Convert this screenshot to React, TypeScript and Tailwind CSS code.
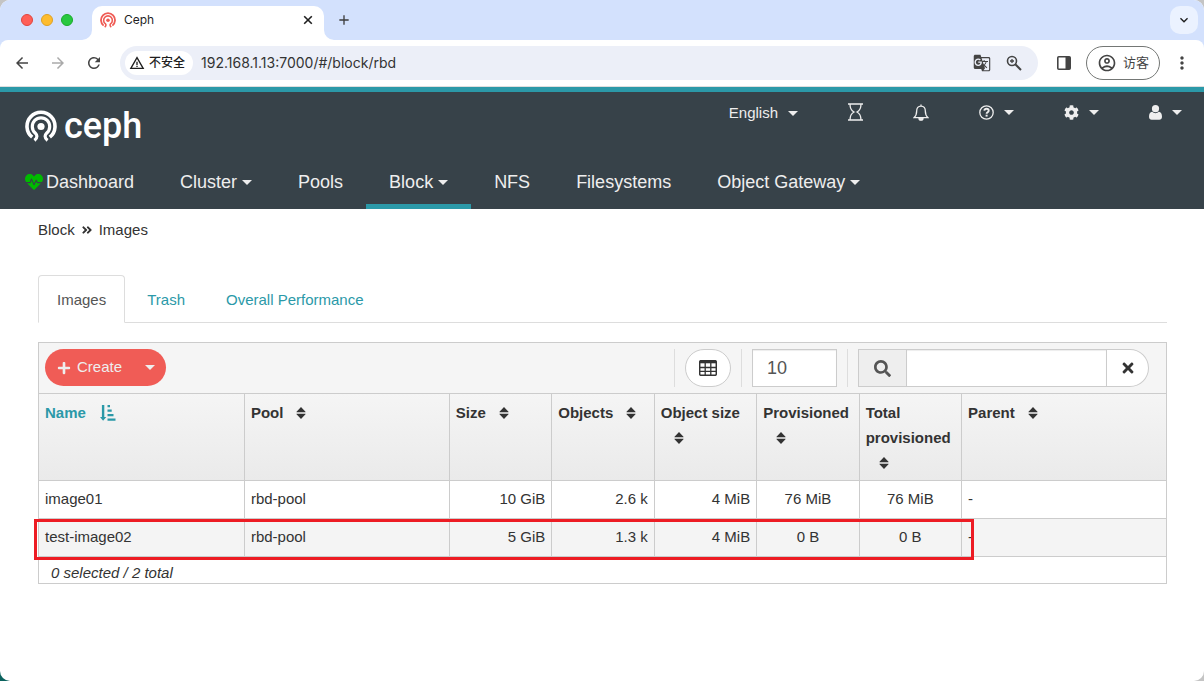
import type { ReactNode } from "react";
import { FaAngleDoubleRight, FaCog, FaHeartbeat, FaPlus, FaSearch, FaTimes } from "react-icons/fa";
import {
  MdAdd,
  MdArrowBack,
  MdArrowForward,
  MdGTranslate,
  MdKeyboardArrowDown,
  MdMoreVert,
  MdOutlineAccountCircle,
  MdRefresh,
  MdWarningAmber,
} from "react-icons/md";

const images = [
  { name: "image01", pool: "rbd-pool", size: "10 GiB", objects: "2.6 k", objectSize: "4 MiB", provisioned: "76 MiB", total: "76 MiB", parent: "-" },
  { name: "test-image02", pool: "rbd-pool", size: "5 GiB", objects: "1.3 k", objectSize: "4 MiB", provisioned: "0 B", total: "0 B", parent: "-", marked: true },
];

const columns = ["Pool", "Size", "Objects", "Object size", "Provisioned", "Total provisioned", "Parent"];

const navItems = [
  { label: "Dashboard", heart: true },
  { label: "Cluster", menu: true },
  { label: "Pools" },
  { label: "Block", menu: true, active: true },
  { label: "NFS" },
  { label: "Filesystems" },
  { label: "Object Gateway", menu: true },
];

const tabs = [
  { label: "Images", active: true },
  { label: "Trash" },
  { label: "Overall Performance" },
];

const cell = "border-b border-l border-[#ccc] px-1.5 first:border-l-0";
const headCell = "border-y border-l border-[#ccc] px-1.5 pt-1.5 first:border-l-0";

const Caret = () => (
  <svg viewBox="0 0 10 5" className="h-[5px] w-2.5 shrink-0" fill="currentColor" aria-hidden="true">
    <path d="M0 0h10L5 5z" />
  </svg>
);

const CephMark = ({ className }: { className: string }) => (
  <svg viewBox="0 0 32 32" className={className} fill="none" stroke="currentColor" aria-hidden="true">
    <path d="M7.2 27.2A14 14 0 1 1 24.8 27.2" strokeWidth="3.6" />
    <path d="M9.4 30.4c1.9-1.4 2.5-2.6 2.5-4.2 0-1.4-.7-2.1-1.7-3.2a8.7 8.7 0 1 1 11.6 0c-1 1.1-1.7 1.8-1.7 3.2 0 1.6.6 2.8 2.5 4.2" strokeWidth="3.2" />
    <circle cx="16" cy="16.5" r="3.6" fill="currentColor" stroke="none" />
  </svg>
);

const SortIcon = () => (
  <svg viewBox="0 0 10 12" className="ml-[13px] inline-block h-3 w-2.5 align-[-1px]" fill="currentColor" aria-hidden="true">
    <path d="M5 0l4.5 4.8v.5H.5v-.5zM5 12l4.5-4.8v-.5H.5v.5z" />
  </svg>
);

const SortAscIcon = () => (
  <svg viewBox="0 0 16 16" className="ml-3.5 inline-block h-4 w-4 align-[-3px]" fill="currentColor" aria-hidden="true">
    <path d="M1.9 0h2.4v12h2L3.1 15.8 0 12h1.9zM7.5 0H10v2.3H7.5zM7.5 4.5h4.2v2.3H7.5zM7.5 9h6v2.3h-6zM7.5 13.4h8v2.3h-8z" />
  </svg>
);

const HourglassIcon = () => (
  <svg viewBox="0 0 15 18" className="h-[18px] w-[15px]" fill="none" stroke="currentColor" strokeWidth="1.3" aria-hidden="true">
    <path d="M0 1h15M0 17h15M2 1c0 4 1.1 6.5 4 8-2.9 1.5-4 4-4 8M13 1c0 4-1.1 6.5-4 8 2.9 1.5 4 4 4 8" />
  </svg>
);

const BellIcon = () => (
  <svg viewBox="0 0 16 17" className="h-[17px] w-4" fill="none" stroke="currentColor" strokeWidth="1.3" aria-hidden="true">
    <path d="M8 2.1c-2.900 0-4.300 2-4.300 4.600 0 3.300-.9 5.500-2.700 7h14c-1.800-1.500-2.700-3.700-2.700-7 0-2.600-1.400-4.600-4.300-4.600zM8 .4v1.700" />
    <path d="M6 14.2a2 2 0 0 0 4 0z" fill="currentColor" />
  </svg>
);

const HelpIcon = () => (
  <svg viewBox="0 0 15 15" className="h-[15px] w-[15px]" fill="none" stroke="currentColor" aria-hidden="true">
    <circle cx="7.5" cy="7.5" r="6.7" strokeWidth="1.3" />
    <path d="M5.3 5.7c.2-1.3 1.1-1.9 2.2-1.9 1.2 0 2.2.7 2.2 1.9 0 1.5-2.1 1.5-2.1 3" strokeWidth="1.9" />
    <path d="M6.6 9.700h2v1.900h-2z" fill="currentColor" stroke="none" />
  </svg>
);

const UserIcon = () => (
  <svg viewBox="0 0 13 15" className="h-[15px] w-[13px]" fill="currentColor" aria-hidden="true">
    <circle cx="6.5" cy="3.7" r="3.6" />
    <path d="M3.2 6.8a4.5 4.5 0 0 0 6.6 0C12 7 13 9 13 11.8c0 1.9-1.1 3-2.7 3H2.7c-1.600 0-2.700-1.100-2.700-3C0 9 1 7 3.2 6.8z" />
  </svg>
);

const TableIcon = () => (
  <svg viewBox="0 0 18 16" className="h-4 w-[18px]" fill="none" stroke="currentColor" aria-hidden="true">
    <rect x=".7" y=".7" width="16.6" height="14.6" rx="1.3" strokeWidth="1.5" />
    <path d="M1 2h16" strokeWidth="2.6" />
    <path d="M1 7.5h16M1 11.3h16M6.2 3v12M11.8 3v12" strokeWidth="1.3" />
  </svg>
);

const Flare = ({ className }: { className: string }) => (
  <svg viewBox="0 0 10 10" className={`absolute bottom-0 h-2.5 w-2.5 text-white ${className}`} fill="currentColor" aria-hidden="true">
    <path d="M10 0v10H0A10 10 0 0 0 10 0z" />
  </svg>
);

const BrowserChrome = () => (
  <header className="bg-[#d3e1fd] font-[Inter,'Noto_Sans_CJK_SC',sans-serif] text-[#1f1f1f]">
    <div className="flex h-10 items-center pr-1.5 pl-[21px]">
      <div className="flex gap-2">
        <span className="size-3 rounded-full border border-[#e0443e] bg-[#ff5f57]" />
        <span className="size-3 rounded-full border border-[#dea123] bg-[#febc2e]" />
        <span className="size-3 rounded-full border border-[#1aab29] bg-[#28c840]" />
      </div>
      <div className="relative ml-[19px] flex h-[34px] w-[232px] items-center self-end rounded-t-[10px] bg-white pr-2.5 pb-1.5 pl-2">
        <Flare className="-left-2.5" />
        <Flare className="-right-2.5 -scale-x-100" />
        <CephMark className="size-4 text-[#ef5c55]" />
        <span className="ml-2 flex-1 text-xs">Ceph</span>
        <button type="button" aria-label="Close tab">
          <svg viewBox="0 0 12 12" className="size-3" fill="none" stroke="currentColor" strokeWidth="1.6" aria-hidden="true">
            <path d="M2.2 2.2l7.6 7.6M9.8 2.2L2.2 9.8" />
          </svg>
        </button>
      </div>
      <button type="button" aria-label="New tab" className="ml-3 text-[#3c3c3c]">
        <MdAdd className="size-4" />
      </button>
      <button type="button" aria-label="Search tabs" className="ml-auto flex size-7 items-center justify-center rounded-[10px] bg-[#ebf2ff]">
        <MdKeyboardArrowDown className="size-4" />
      </button>
    </div>
    <div className="flex h-[47px] items-center rounded-t-lg border-b border-[#dedede] bg-white pr-3 pl-[13px] text-[#444]">
      <button type="button" aria-label="Back">
        <MdArrowBack className="size-[18px]" />
      </button>
      <button type="button" aria-label="Forward" className="ml-[18px] text-[#aaa]">
        <MdArrowForward className="size-[18px]" />
      </button>
      <button type="button" aria-label="Reload" className="ml-[18px]">
        <MdRefresh className="size-[18px]" />
      </button>
      <div className="ml-[17px] flex h-[34px] flex-1 items-center rounded-full bg-[#eceff8] pr-4 pl-[5px]">
        <span className="flex h-6 items-center gap-1 rounded-full bg-white px-1 pr-2 text-xs font-medium text-[#1f1f1f]">
          <MdWarningAmber className="size-4" />
          不安全
        </span>
        <input aria-label="Address" defaultValue="192.168.1.13:7000/#/block/rbd" className="ml-2 min-w-0 flex-1 bg-transparent text-sm text-[#333] outline-none" />
        <MdGTranslate className="size-[18px]" />
        <svg viewBox="0 0 16 16" className="ml-[15px] size-4" fill="none" stroke="currentColor" aria-hidden="true">
          <circle cx="6" cy="6" r="4.5" strokeWidth="1.6" />
          <path d="M9.300 9.300L15 15" strokeWidth="2" />
          <path d="M6 4v4M4 6h4" strokeWidth="1.3" />
        </svg>
      </div>
      <button type="button" aria-label="Side panel" className="ml-[19px]">
        <svg viewBox="0 0 14 14" className="size-3.5" aria-hidden="true">
          <rect x=".8" y=".8" width="12.4" height="12.4" rx="1" fill="none" stroke="currentColor" strokeWidth="1.6" />
          <path d="M8.5 1H13v12H8.5z" fill="currentColor" />
        </svg>
      </button>
      <button type="button" className="ml-[15px] flex h-[34px] items-center gap-1.5 rounded-full border border-[#747775] px-2.5 text-[13px]">
        <MdOutlineAccountCircle className="size-5" />
        访客
      </button>
      <button type="button" aria-label="More" className="ml-3">
        <MdMoreVert className="size-5" />
      </button>
    </div>
  </header>
);

const UtilityButton = ({ label, menu, children }: { label: string; menu?: boolean; children: ReactNode }) => (
  <button type="button" aria-label={label} className="flex h-5 items-center gap-2.5">
    {children}
    {menu && <Caret />}
  </button>
);

const Navigation = () => (
  <div className="border-t-[5px] border-[#2b99a8] bg-[#374249] text-[#eee]">
    <div className="flex items-start justify-between pt-2.5 pr-[22px] pl-[25px]">
      <a href="#/dashboard" className="flex items-start gap-[7px] pt-1 text-white">
        <CephMark className="mt-1 size-8" />
        <span className="font-[Roboto,sans-serif] text-4xl leading-10 font-medium">ceph</span>
      </a>
      <div className="flex gap-[50px] text-[15px]">
        <button type="button" className="flex h-[22px] items-center gap-2.5">
          English <Caret />
        </button>
        <UtilityButton label="Tasks"><HourglassIcon /></UtilityButton>
        <UtilityButton label="Notifications"><BellIcon /></UtilityButton>
        <UtilityButton label="Help" menu><HelpIcon /></UtilityButton>
        <UtilityButton label="Settings" menu><FaCog className="size-[15px]" /></UtilityButton>
        <UtilityButton label="User" menu><UserIcon /></UtilityButton>
      </div>
    </div>
    <nav className="mt-2 flex pl-0.5">
      {navItems.map((item) => (
        <a
          key={item.label}
          href="#/block/rbd"
          className={`flex h-[55px] items-center border-b-[5px] px-[23px] pt-1.5 text-lg ${item.active ? "border-[#2b99a8]" : "border-transparent"}`}
        >
          {item.heart && <FaHeartbeat className="mr-[3px] size-[18px] text-[#00bb00]" />}
          {item.label}
          {item.menu && <span className="ml-[5px]"><Caret /></span>}
        </a>
      ))}
    </nav>
  </div>
);

const Toolbar = () => (
  <div className="flex h-[50px] items-start bg-[#f5f5f5] pt-1.5 pr-[17px] pl-1.5">
    <div className="flex h-[37px] items-center rounded-full bg-[#f05c56] text-[#eee]">
      <button type="button" className="flex h-full items-center gap-1.5 pl-3">
        <FaPlus className="size-3.5" />
        Create
      </button>
      <button type="button" aria-label="More actions" className="flex h-full items-center pr-[11px] pl-[23px]">
        <Caret />
      </button>
    </div>
    <div className="ml-auto flex h-[38px] items-stretch">
      <div className="border-x border-[#ddd] px-2.5">
        <button type="button" aria-label="Toggle columns" className="flex h-full w-[46px] items-center justify-center rounded-full border border-[#ccc] bg-white">
          <TableIcon />
        </button>
      </div>
      <div className="border-r border-[#ddd] px-2.5">
        <input aria-label="Rows per page" defaultValue="10" className="h-full w-[85px] border border-[#ccc] bg-white px-3.5 text-lg text-[#555] shadow-[inset_0_1px_1px_rgba(0,0,0,0.075)]" />
      </div>
      <div className="ml-2.5 flex overflow-hidden rounded-l-md rounded-r-full border border-[#ccc] bg-white">
        <label htmlFor="search" className="flex w-12 items-center justify-center border-r border-[#ccc] bg-[#eee] text-[#555]">
          <FaSearch className="size-[17px]" />
        </label>
        <input id="search" aria-label="Search" className="w-[200px] border-r border-[#ccc] px-3 shadow-[inset_0_1px_1px_rgba(0,0,0,0.075)]" />
        <button type="button" aria-label="Clear search" className="flex w-[41px] items-center justify-center">
          <FaTimes className="size-4" />
        </button>
      </div>
    </div>
  </div>
);

const ImageTable = () => (
  <div className="mt-[19px] border border-[#ccc]">
    <Toolbar />
    <table className="w-full table-fixed border-separate border-spacing-0">
      <colgroup>
        <col className="w-2/11" />
        <col className="w-2/11" />
        <col className="w-1/11" />
        <col className="w-1/11" />
        <col className="w-1/11" />
        <col className="w-1/11" />
        <col className="w-1/11" />
        <col className="w-2/11" />
      </colgroup>
      <thead className="bg-linear-to-b from-[#f5f5f5] to-[#eaeaea] text-left align-top leading-[25px]">
        <tr className="h-[88px]">
          <th className={`${headCell} text-[#2b99a8]`}>
            Name
            <SortAscIcon />
          </th>
          {columns.map((column) => (
            <th key={column} className={headCell}>
              {column}
              <SortIcon />
            </th>
          ))}
        </tr>
      </thead>
      <tbody>
        {images.map((image) => (
          <tr key={image.name} className="relative h-[38px] even:bg-[#f4f4f4]">
            <td className={cell}>
              {image.name}
              {image.marked && <span className="absolute top-0 right-[17%] -bottom-[3px] -left-[5px] border-[3px] border-[#ed1c24]" />}
            </td>
            <td className={cell}>{image.pool}</td>
            <td className={`${cell} text-right`}>{image.size}</td>
            <td className={`${cell} text-right`}>{image.objects}</td>
            <td className={`${cell} text-right`}>{image.objectSize}</td>
            <td className={`${cell} text-center`}>{image.provisioned}</td>
            <td className={`${cell} text-center`}>{image.total}</td>
            <td className={cell}>{image.parent}</td>
          </tr>
        ))}
      </tbody>
    </table>
    <p className="px-3 pt-1.5 leading-5 italic">0 selected / 2 total</p>
  </div>
);

const App = () => {
  return (
    <div className="min-h-screen bg-linear-to-tr from-[#0b625e] from-10% via-[#c4c4c4] via-20% to-[#c4c4c4]">
      <div className="min-h-screen overflow-hidden rounded-[10px] bg-white font-['Liberation_Sans',Arial,sans-serif] text-[15px] text-[#333]">
        <BrowserChrome />
        <Navigation />
        <main className="pt-2.5 pr-[37px] pl-[38px]">
          <div className="flex items-center gap-1.5 leading-[22px]">
            <a href="#/block">Block</a>
            <FaAngleDoubleRight className="size-3" />
            <span>Images</span>
          </div>
          <div className="mt-[34px] flex gap-[3px] border-b border-[#ddd]">
            {tabs.map((tab) => (
              <a
                key={tab.label}
                href="#/block/rbd"
                className={`-mb-px flex h-12 items-center rounded-t border px-[18px] pt-0.5 ${tab.active ? "border-[#ddd] border-b-white text-[#555]" : "border-transparent text-[#2b99a8]"}`}
              >
                {tab.label}
              </a>
            ))}
          </div>
          <ImageTable />
        </main>
      </div>
    </div>
  );
};

export default App;
